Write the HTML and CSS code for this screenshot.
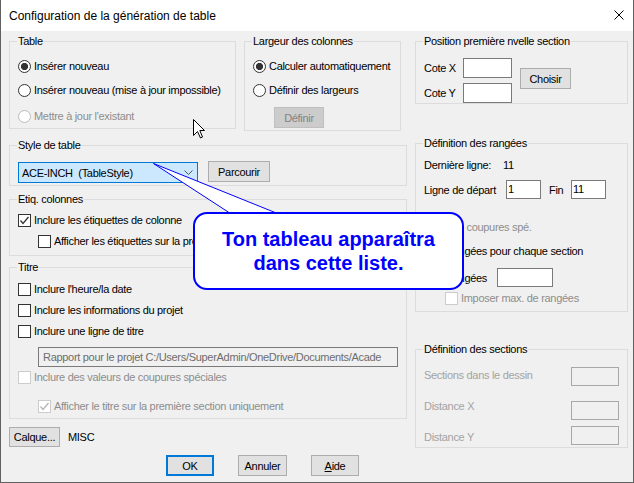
FILE: index.html
```html
<!DOCTYPE html>
<html lang="fr">
<head>
<meta charset="utf-8">
<title>Configuration de la génération de table</title>
<link rel="stylesheet" href="styles.css">
</head>
<body>
<div class="window">
  <div class="titlebar">
    <span class="title">Configuration de la génération de table</span>
    <svg class="close" width="10" height="10" viewBox="0 0 10 10"><path d="M0.5 0.5 L9.5 9.5 M9.5 0.5 L0.5 9.5" stroke="#000" stroke-width="1" fill="none"/></svg>
  </div>
  <div class="client">
    <div class="col">
      <div class="row-top">
        <div class="group g-table">
          <div class="legend">Table</div>
          <div class="opt m11"><span class="radio on"></span>Insérer nouveau</div>
          <div class="opt m10"><span class="radio"></span>Insérer nouveau (mise à jour impossible)</div>
          <div class="opt m12 dis"><span class="radio"></span>Mettre à jour l'existant</div>
        </div>
        <div class="group g-largeur">
          <div class="legend">Largeur des colonnes</div>
          <div class="opt m11"><span class="radio on"></span>Calculer automatiquement</div>
          <div class="opt m10"><span class="radio"></span>Définir des largeurs</div>
          <div class="btn btn-dis btn-definir">Définir</div>
        </div>
      </div>
      <div class="group g-style">
        <div class="legend">Style de table</div>
        <div class="style-row">
          <div class="combo"><span class="combo-text">ACE-INCH  (TableStyle)</span><svg width="9" height="5" viewBox="0 0 9 5"><path d="M0.5 0.5 L4.5 4.5 L8.5 0.5" stroke="#555" fill="none"/></svg></div>
          <div class="btn btn-parcourir">Parcourir</div>
        </div>
      </div>
      <div class="group g-etiq">
        <div class="legend">Etiq. colonnes</div>
        <div class="opt m7"><span class="check"><svg width="11" height="11" viewBox="0 0 11 11"><path d="M1.5 5.5 L4 8.5 L9.5 2" stroke="#333" stroke-width="1.3" fill="none"/></svg></span>Inclure les étiquettes de colonne</div>
        <div class="opt m7 indent"><span class="check"></span>Afficher les étiquettes sur la première section uniquement</div>
      </div>
      <div class="group g-titre">
        <div class="legend">Titre</div>
        <div class="opt m8"><span class="check"></span>Inclure l'heure/la date</div>
        <div class="opt m7"><span class="check"></span>Inclure les informations du projet</div>
        <div class="opt m7"><span class="check"></span>Inclure une ligne de titre</div>
        <div class="textbox">Rapport pour le projet C:/Users/SuperAdmin/OneDrive/Documents/Acade</div>
        <div class="opt m3 dis"><span class="check"></span>Inclure des valeurs de coupures spéciales</div>
        <div class="opt m15 indent dis"><span class="check"><svg width="11" height="11" viewBox="0 0 11 11"><path d="M1.5 5.5 L4 8.5 L9.5 2" stroke="#b4b4b4" stroke-width="1.3" fill="none"/></svg></span>Afficher le titre sur la première section uniquement</div>
      </div>
      <div class="calque-row">
        <div class="btn btn-calque">Calque...</div>
        <span class="misc">MISC</span>
      </div>
    </div>
    <div class="col">
      <div class="group g-pos">
        <div class="legend">Position première nvelle section</div>
        <div class="pos-body">
          <div class="pos-fields">
            <div class="field"><span class="lbl-cote">Cote X</span><span class="input w49"></span></div>
            <div class="field m5"><span class="lbl-cote">Cote Y</span><span class="input w49"></span></div>
          </div>
          <div class="btn btn-choisir">Choisir</div>
        </div>
      </div>
      <div class="group g-rangees">
        <div class="legend">Définition des rangées</div>
        <div class="opt m8"><span class="lbl-derniere">Dernière ligne:</span>11</div>
        <div class="field m8">
          <span class="lbl-depart">Ligne de départ</span><span class="input w35">1</span>
          <span class="lbl-fin">Fin</span><span class="input w35">11</span>
        </div>
        <div class="opt m21 dis"><span class="check"></span><span class="gap8"></span>Incl. coupures spé.</div>
        <div class="opt m10">Max. rangées pour chaque section</div>
        <div class="field m10"><span class="lbl-max">Max. rangées</span><span class="input w56"></span></div>
        <div class="opt m4 indent-r dis"><span class="check"></span>Imposer max. de rangées</div>
      </div>
      <div class="group g-sections">
        <div class="legend">Définition des sections</div>
        <div class="sec-row m11"><span class="sec-lbl l1">Sections dans le dessin</span><span class="input input-dis w48"></span></div>
        <div class="sec-row m15"><span class="sec-lbl l2">Distance X</span><span class="input input-dis w48"></span></div>
        <div class="sec-row m6"><span class="sec-lbl l3">Distance Y</span><span class="input input-dis w48"></span></div>
      </div>
    </div>
    <div class="actions">
      <div class="btn btn-ok">OK</div>
      <div class="btn btn-annuler">Annuler</div>
      <div class="btn btn-aide"><span><u>A</u>ide</span></div>
    </div>
  </div>
  <svg class="tail" width="130" height="56" viewBox="0 0 130 56"><polygon points="2.5,3.5 79.5,53.5 126.5,53.5" fill="#fff" stroke="#0000ff" stroke-width="1"/></svg>
  <div class="callout">Ton tableau apparaîtra<br>dans cette liste.</div>
  <svg class="cursor" width="13" height="20" viewBox="0 0 13 20"><path d="M0.5 0.5 L0.5 16.5 L4.5 12.5 L7.5 19 L9.5 18 L6.8 11.5 L11.5 11.5 Z" fill="#fff" stroke="#000" stroke-width="1"/></svg>
</div>
</body>
</html>
```

FILE: styles.css
```css
* { box-sizing: border-box; }
html, body { margin: 0; padding: 0; }
body {
  font-family: "Liberation Sans", Arial, sans-serif;
  font-size: 11px;
  letter-spacing: -0.3px;
  color: #000;
  background: #fff;
}
.window {
  position: relative;
  width: 634px;
  height: 483px;
  border: 1px solid #616161;
  border-top: none;
  background: #f0f0f0;
  overflow: hidden;
}
.titlebar {
  height: 31px;
  background: #fff;
  display: flex;
  align-items: center;
  justify-content: space-between;
  padding-left: 8px;
}
.title { font-size: 12px; letter-spacing: 0; line-height: 16px; }
.close { margin-right: 9px; margin-top: -1px; }

.client {
  display: grid;
  grid-template-columns: 398px 213px;
  column-gap: 8px;
  align-items: start;
  padding: 10px 0 0 8px;
}
.col { display: flex; flex-direction: column; }

.group { border: 1px solid #dcdcdc; padding: 0 8px; }
.legend {
  margin: -7px 0 0 -1px;
  height: 13px;
  line-height: 13px;
  padding: 0 1px;
  background: #f0f0f0;
  width: max-content;
  white-space: nowrap;
  color: #000;
}

.opt {
  display: flex;
  align-items: center;
  height: 14px;
  line-height: 14px;
  white-space: nowrap;
}
.dis { color: #8d8d8d; }
.indent { margin-left: 20px; }
.indent-r { margin-left: 21px; }

.m3 { margin-top: 3px; }
.m4 { margin-top: 4px; }
.m5 { margin-top: 5px; }
.m6 { margin-top: 6px; }
.m7 { margin-top: 7px; }
.m8 { margin-top: 8px; }
.m10 { margin-top: 10px; }
.m11 { margin-top: 11px; }
.m12 { margin-top: 12px; }
.m15 { margin-top: 15px; }
.m21 { margin-top: 21px; }

.radio {
  flex: none;
  width: 13px;
  height: 13px;
  border: 1px solid #333;
  border-radius: 50%;
  background: #fff;
  margin-right: 3px;
}
.radio.on { background: radial-gradient(circle, #333 0 3.3px, #fff 3.9px); }
.dis .radio { border-color: #bcbcbc; }

.check {
  flex: none;
  width: 13px;
  height: 13px;
  border: 1px solid #333;
  background: #fff;
  margin-right: 3px;
  display: flex;
}
.dis .check { border-color: #cccccc; }
.gap8 { width: 5px; flex: none; }

.btn {
  flex: none;
  height: 21px;
  border: 1px solid #adadad;
  background: #e1e1e1;
  display: flex;
  align-items: center;
  justify-content: center;
  white-space: nowrap;
}
.btn-dis { background: #cccccc; border-color: #bfbfbf; color: #838383; }

.row-top { display: flex; align-items: flex-start; }
.g-table { width: 227px; height: 88px; }
.g-largeur { width: 157px; height: 90px; margin-left: 8px; }
.btn-definir { width: 50px; margin: 10px 0 0 21px; }

.g-style { height: 41px; margin-top: 14px; }
.style-row { display: flex; align-items: flex-start; margin-top: 10px; }
.combo {
  width: 180px;
  height: 21px;
  border: 1px solid #0078d7;
  background: #cce8ff;
  display: flex;
  align-items: center;
  justify-content: space-between;
  padding: 0 4px 0 3px;
}
.combo-text { white-space: pre; }
.btn-parcourir { width: 62px; margin: -1px 0 0 10px; }

.g-etiq { height: 57px; margin-top: 13px; }
.g-titre { height: 152px; margin-top: 11px; }
.textbox {
  margin: 9px 0 0 20px;
  width: 360px;
  height: 20px;
  line-height: 18px;
  border: 1px solid #7a7a7a;
  background: #f0f0f0;
  color: #6d6d6d;
  padding-left: 4px;
  white-space: nowrap;
  overflow: hidden;
}

.calque-row { display: flex; align-items: center; margin-top: 8px; height: 20px; }
.btn-calque { width: 51px; height: 20px; }
.misc { margin-left: 8px; }

.g-pos { height: 63px; }
.pos-body { display: flex; align-items: flex-start; margin-top: 10px; }
.field { display: flex; align-items: center; white-space: nowrap; }
.lbl-cote { width: 39px; }
.input {
  flex: none;
  height: 20px;
  border: 1px solid #7a7a7a;
  background: #fff;
  line-height: 17px;
  padding-left: 1px;
}
.input-dis { background: #f0f0f0; border-color: #a8a8a8; height: 19px; }
.w35 { width: 35px; height: 19px; }
.w48 { width: 48px; }
.w49 { width: 49px; }
.w56 { width: 56px; height: 19px; }
.btn-choisir { width: 51px; margin: 10px 0 0 8px; }

.g-rangees { height: 169px; margin-top: 39px; }
.lbl-derniere { width: 79px; }
.lbl-depart { width: 82px; }
.lbl-fin { width: 22px; margin-left: 8px; }
.lbl-max { width: 73px; }

.g-sections { height: 99px; margin-top: 37px; }
.sec-row { display: flex; align-items: flex-start; justify-content: space-between; height: 19px; white-space: nowrap; }
.sec-lbl { color: #a3a3a3; line-height: 14px; }
.l1 { margin-top: 1px; }
.l2 { margin-top: -2px; }
.l3 { margin-top: 4px; }

.actions {
  grid-column: 1 / -1;
  display: flex;
  gap: 24px;
  margin-top: 7px;
  padding-left: 157px;
}
.btn-ok { width: 48px; border: 2px solid #0078d7; }
.btn-annuler { width: 49px; }
.btn-aide { width: 48px; }

.tail { position: absolute; left: 150px; top: 160px; }
.callout {
  position: absolute;
  left: 192px;
  top: 212px;
  width: 271px;
  height: 78px;
  border: 2px solid #0000ff;
  border-radius: 14px;
  background: #fff;
  color: #0000ff;
  font-weight: bold;
  font-size: 20px;
  line-height: 24px;
  letter-spacing: 0;
  text-align: center;
  display: flex;
  align-items: center;
  justify-content: center;
}
.cursor { position: absolute; left: 192px; top: 119px; }
```
